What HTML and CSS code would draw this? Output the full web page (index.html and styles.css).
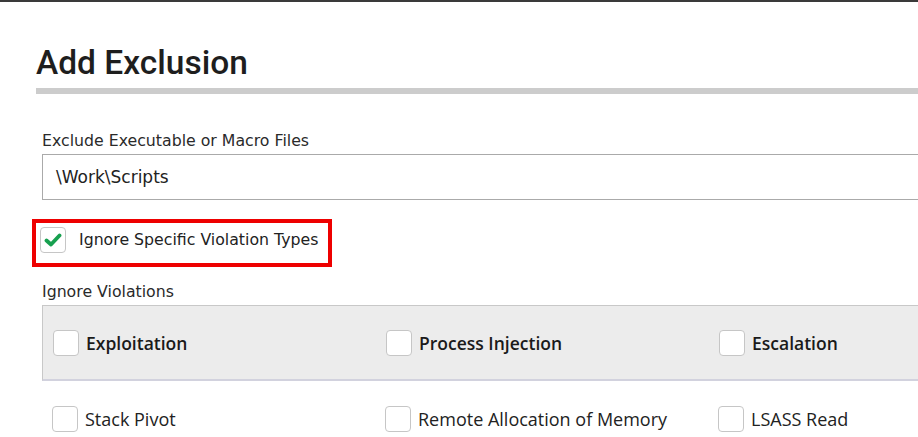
FILE: index.html
```html
<!DOCTYPE html>
<html lang="en">
<head>
    <meta charset="UTF-8">
    <title>Add Exclusion</title>
    <link rel="stylesheet" href="styles.css">
</head>
<body>
    <div class="page">
        <h1>Add Exclusion</h1>
        <div class="rule"></div>
        <div class="form">
            <label class="field-label">Exclude Executable or Macro Files</label>
            <div class="text-input">\Work\Scripts</div>

            <div class="highlight">
                <span class="check checked">
                    <svg width="18" height="14" viewBox="0 0 18 14"><polyline points="2.5,7.5 7,11.5 15.5,2.5" fill="none" stroke="#17a04f" stroke-width="3.8" stroke-linecap="round" stroke-linejoin="round"/></svg>
                </span>
                <span class="option-text">Ignore Specific Violation Types</span>
            </div>

            <label class="field-label violations-label">Ignore Violations</label>
            <div class="category-row">
                <div class="cell"><span class="check"></span><span class="category">Exploitation</span></div>
                <div class="cell"><span class="check"></span><span class="category">Process Injection</span></div>
                <div class="cell"><span class="check"></span><span class="category">Escalation</span></div>
            </div>
            <div class="type-row">
                <div class="cell"><span class="check"></span><span class="type">Stack Pivot</span></div>
                <div class="cell"><span class="check"></span><span class="type">Remote Allocation of Memory</span></div>
                <div class="cell"><span class="check"></span><span class="type">LSASS Read</span></div>
            </div>
        </div>
    </div>
</body>
</html>
```

FILE: styles.css
```css
html, body {
    margin: 0;
    background: #fff;
    overflow: hidden;
}
.page {
    border-top: 2px solid #3a3a3a;
    padding-left: 36px;
    width: 1040px;
    color: #222;
}
h1 {
    font-family: Roboto, sans-serif;
    font-weight: 500;
    font-size: 33.5px;
    line-height: 44px;
    margin: 39px 0 0 0;
    color: #1e1e1e;
}
.rule {
    height: 6px;
    background: #cccccc;
    margin-top: 3px;
}
.form {
    margin-left: 6px;
}
.field-label {
    display: block;
    font-family: "DejaVu Sans", sans-serif;
    font-size: 15.75px;
    line-height: 20px;
    margin-top: 37px;
    color: #2a2a2a;
}
.text-input {
    margin-top: 3px;
    height: 44px;
    border: 1px solid #aaaaaa;
    padding-left: 13px;
    font-family: "DejaVu Sans", sans-serif;
    font-size: 17px;
    line-height: 44px;
    color: #222;
}
.highlight {
    display: inline-flex;
    align-items: center;
    margin: 19px 0 0 -10px;
    border: 4px solid #ee0000;
    padding: 4px 10px 10px 4px;
}
.check {
    display: inline-flex;
    align-items: center;
    justify-content: center;
    width: 24px;
    height: 24px;
    border: 1px solid #c6c6c6;
    border-radius: 4px;
    background: #fff;
    flex: none;
}
.highlight .check {
    margin-right: 13px;
}
.option-text {
    font-family: "DejaVu Sans", sans-serif;
    font-size: 15.75px;
    line-height: 20px;
    color: #222;
}
.violations-label {
    margin-top: 15px;
}
.category-row {
    display: grid;
    grid-template-columns: 333px 333px 333px;
    align-items: center;
    margin-top: 3px;
    height: 73px;
    background: #ececec;
    border: 1px solid #c8c8c8;
    border-bottom: 2px solid #d2d2de;
    padding-left: 10px;
}
.cell {
    display: flex;
    align-items: center;
}
.cell .check {
    margin-right: 7px;
}
.category {
    font-family: "Open Sans", sans-serif;
    font-weight: 600;
    font-size: 17.5px;
    color: #1a1a1a;
}
.type-row {
    display: grid;
    grid-template-columns: 333px 333px 333px;
    align-items: center;
    padding-left: 10px;
    margin-top: 25px;
}
.type {
    font-family: "Open Sans", sans-serif;
    font-size: 18px;
    color: #222;
}
```
